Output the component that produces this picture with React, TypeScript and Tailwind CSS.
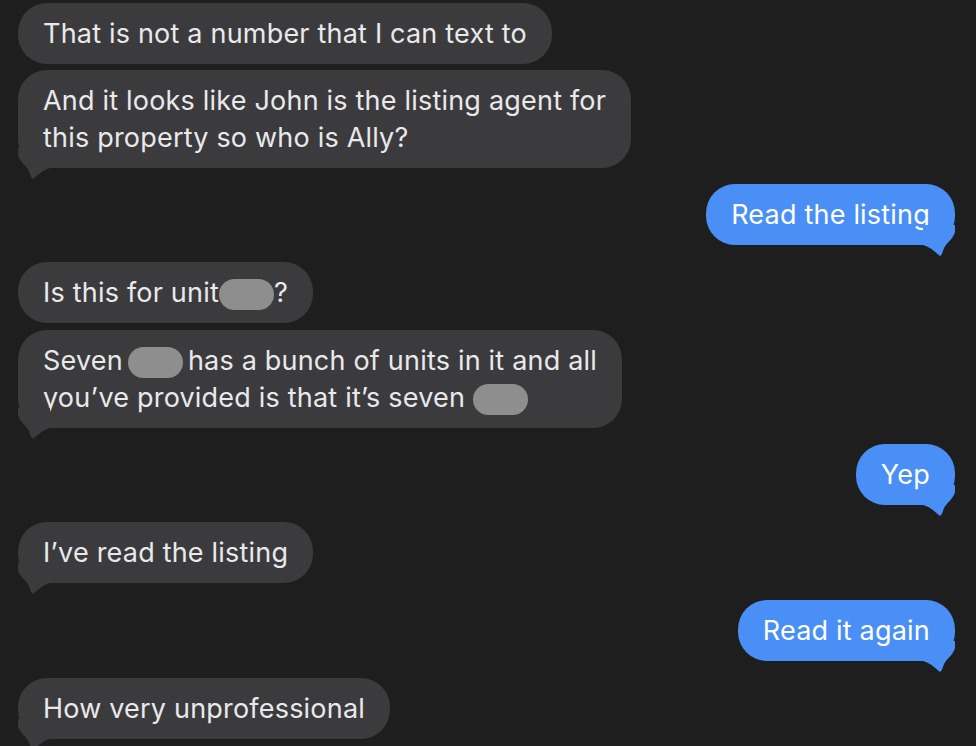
import type { ReactNode } from "react";

function Redacted({ spaced = false }: { spaced?: boolean }) {
  return (
    <span
      className={`inline-block h-[31px] w-[55px] rounded-full bg-[#8e8e8e] align-middle ${
        spaced ? "mx-[5px]" : ""
      }`}
    />
  );
}

function Tail({ side }: { side: "left" | "right" }) {
  const fill = side === "left" ? "#3b3b3d" : "#4a8ff5";
  return (
    <svg
      width="34"
      height="32"
      viewBox="0 0 34 32"
      className={
        side === "left"
          ? "absolute bottom-[-12px] left-0"
          : "absolute bottom-[-12px] right-0 -scale-x-100"
      }
    >
      <path
        d="M0 0 L0 7 C2 15 10 18 12 26 Q13 30 15 31 C19 28 24 22 32 20 L32 0 Z"
        fill={fill}
      />
    </svg>
  );
}

function Bubble({
  side,
  tail = false,
  className = "",
  children,
}: {
  side: "left" | "right";
  tail?: boolean;
  className?: string;
  children: ReactNode;
}) {
  const tone =
    side === "left"
      ? "self-start bg-[#3b3b3d] text-[#e9e9eb]"
      : "self-end bg-[#4a8ff5] text-white";
  return (
    <div
      className={`relative max-w-[640px] rounded-[29px] px-[25px] py-[12px] text-[27px] leading-[37px] tracking-[0.2px] ${tone} ${className}`}
    >
      {children}
      {tail && <Tail side={side} />}
    </div>
  );
}

export default function App() {
  return (
    <div
      className="flex h-[746px] w-[976px] flex-col overflow-hidden bg-[#1e1e1e] pl-[18px] pr-[21px] pt-[3px]"
      style={{ fontFamily: "Inter, 'Noto Sans', sans-serif" }}
    >
      <Bubble side="left">That is not a number that I can text to</Bubble>
      <Bubble side="left" tail className="mt-[6px]">
        And it looks like John is the listing agent for
        <br />
        this property so who is Ally?
      </Bubble>

      <Bubble side="right" tail className="mt-[16px]">
        Read the listing
      </Bubble>

      <Bubble side="left" className="mt-[17px]">
        Is this for unit
        <Redacted />?
      </Bubble>
      <Bubble side="left" tail className="mt-[7px]">
        Seven
        <Redacted spaced />
        has a bunch of units in it and all
        <br />
        you’ve provided is that it’s seven <Redacted />
      </Bubble>

      <Bubble side="right" tail className="mt-[16px]">
        Yep
      </Bubble>

      <Bubble side="left" tail className="mt-[17px]">
        I’ve read the listing
      </Bubble>

      <Bubble side="right" tail className="mt-[17px]">
        Read it again
      </Bubble>

      <Bubble side="left" tail className="mt-[17px]">
        How very unprofessional
      </Bubble>
    </div>
  );
}
